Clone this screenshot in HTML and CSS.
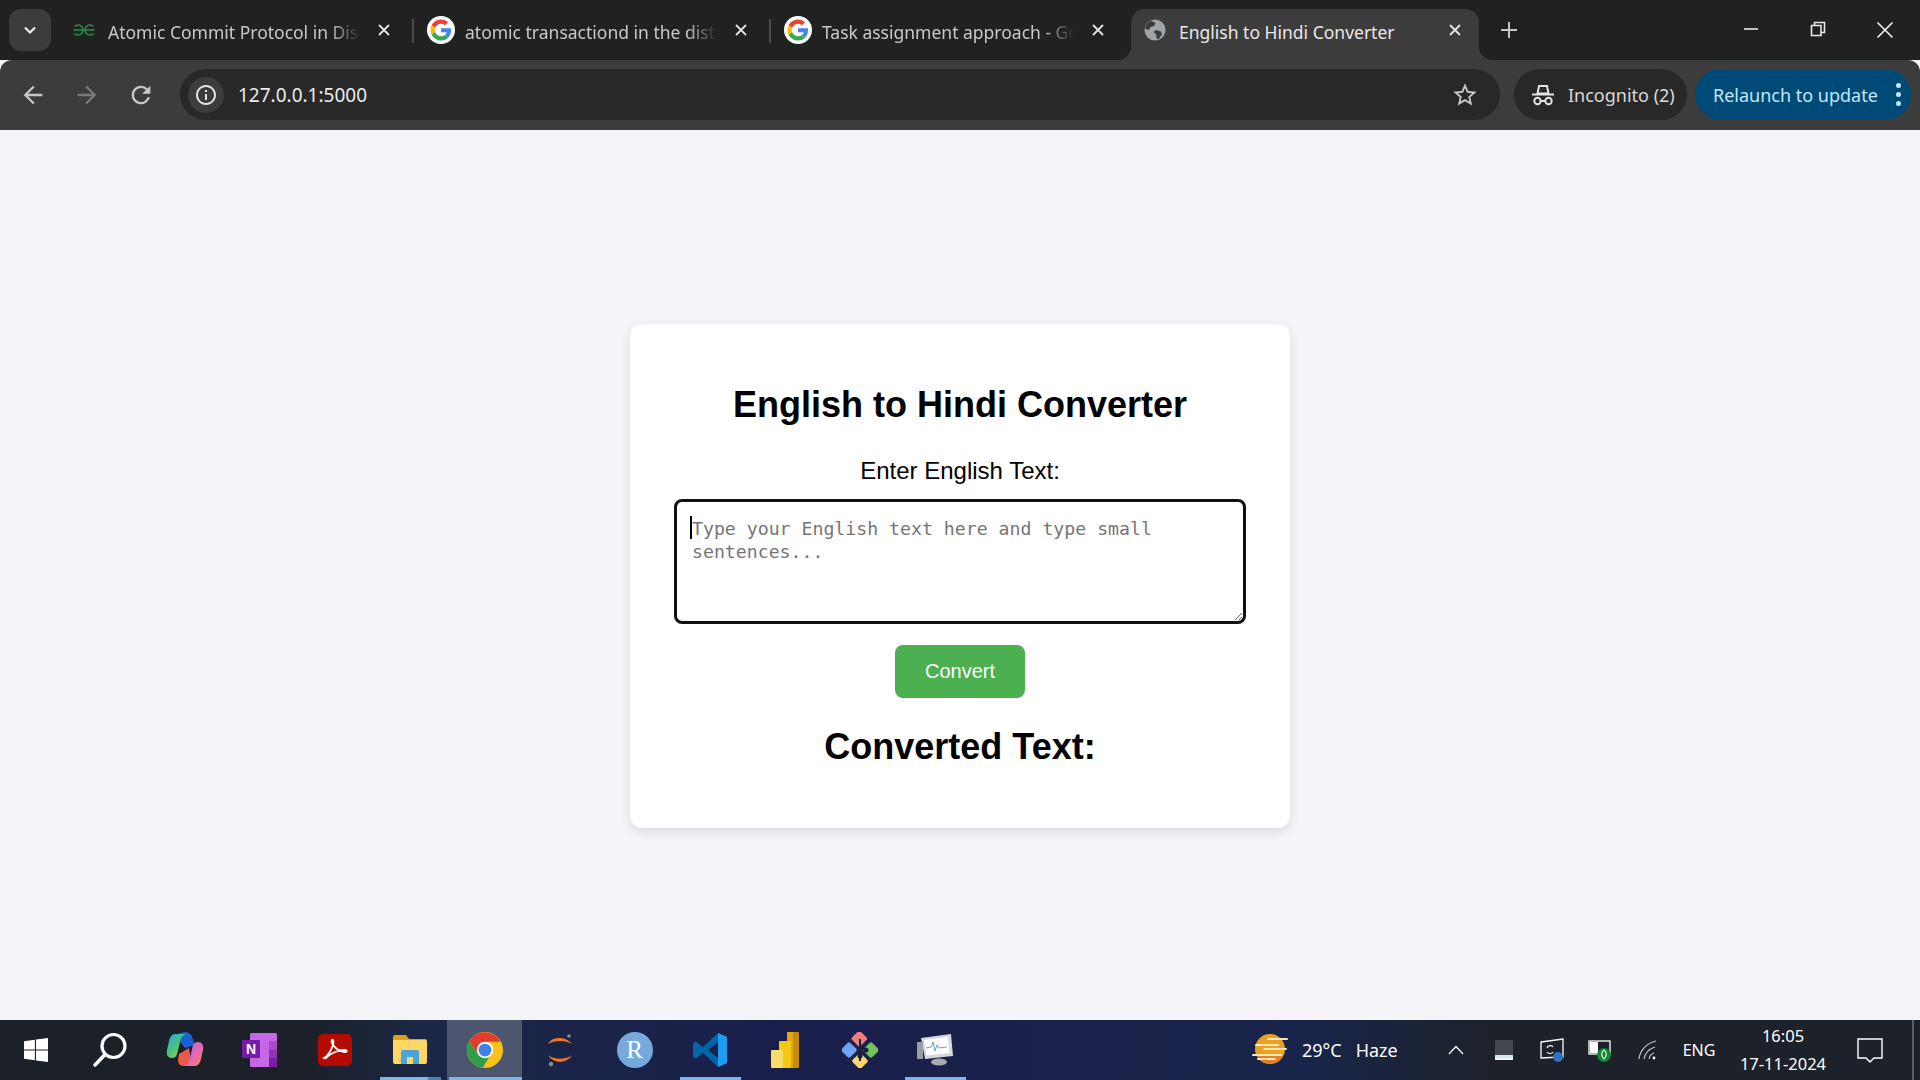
FILE: index.html
```html
<!DOCTYPE html>
<html lang="en">

<head>
    <meta charset="UTF-8">
    <meta name="viewport" content="width=device-width, initial-scale=1.0">
    <title>English to Hindi Converter</title>
    <link rel="stylesheet" href="styles.css">
</head>

<body>
    <svg class="defs" width="0" height="0">
        <symbol id="google" viewBox="-8 -8 64 64">
            <circle cx="24" cy="24" r="32" fill="#fff"/>
            <path fill="#EA4335" d="M24 9.5c3.54 0 6.71 1.22 9.21 3.6l6.85-6.85C35.9 2.38 30.47 0 24 0 14.62 0 6.51 5.38 2.56 13.22l7.98 6.19C12.43 13.72 17.74 9.5 24 9.5z"/>
            <path fill="#4285F4" d="M46.98 24.55c0-1.57-.15-3.09-.38-4.55H24v9.02h12.94c-.58 2.96-2.26 5.48-4.78 7.18l7.73 6c4.51-4.18 7.09-10.36 7.09-17.65z"/>
            <path fill="#FBBC05" d="M10.53 28.59c-.48-1.45-.76-2.99-.76-4.59s.27-3.14.76-4.59l-7.98-6.19C.92 16.46 0 20.12 0 24c0 3.88.92 7.54 2.56 10.78l7.97-6.19z"/>
            <path fill="#34A853" d="M24 48c6.48 0 11.93-2.13 15.89-5.81l-7.73-6c-2.15 1.45-4.92 2.3-8.16 2.3-6.26 0-11.57-4.22-13.47-9.91l-7.98 6.19C6.51 42.62 14.62 48 24 48z"/>
        </symbol>
        <symbol id="close" viewBox="0 0 24 24">
            <path d="M6 6l12 12M18 6L6 18" fill="none" stroke="currentColor" stroke-width="2.2"/>
        </symbol>
    </svg>

    <header class="tabstrip">
        <button class="tab-menu">
            <svg width="16" height="16" viewBox="0 0 16 16"><path d="M3 5.5l5 5 5-5" fill="none" stroke="#e8eaed" stroke-width="2.2"/></svg>
        </button>
        <div class="tab">
            <span class="favicon">
                <svg width="24" height="14" viewBox="0 0 24 13"><path d="M2.5 3A5 5 0 1 1 2.500 10M1.500 6.500H11.500M21.500 3A5 5 0 1 0 21.500 10M22.500 6.500H12.500" fill="none" stroke="#2f8d46" stroke-width="1.500"/></svg>
            </span>
            <span class="tab-title fade">Atomic Commit Protocol in Distributed Systems</span>
            <svg class="tab-close"><use href="#close"/></svg>
        </div>
        <span class="tab-sep"></span>
        <div class="tab">
            <span class="favicon"><svg width="28" height="28"><use href="#google"/></svg></span>
            <span class="tab-title fade">atomic transactiond in the distributed</span>
            <svg class="tab-close"><use href="#close"/></svg>
        </div>
        <span class="tab-sep"></span>
        <div class="tab">
            <span class="favicon"><svg width="28" height="28"><use href="#google"/></svg></span>
            <span class="tab-title fade">Task assignment approach - Google Search</span>
            <svg class="tab-close"><use href="#close"/></svg>
        </div>
        <span class="tab-sep blank"></span>
        <div class="tab active">
            <span class="favicon">
                <svg width="22" height="22" viewBox="0 0 22 22">
                    <circle cx="11" cy="11" r="10.500" fill="#a0a4a9"/>
                    <path d="M7 1.500L11.500 4 10 7 6.500 8 5 11 1 9.500C1.500 6 3.500 3 7 1.500zM12 11l5 1.500 1 3-3.500 5-2-1.500-.5-4-2.500-2z" fill="#3c3c3c"/>
                </svg>
            </span>
            <span class="tab-title">English to Hindi Converter</span>
            <svg class="tab-close"><use href="#close"/></svg>
        </div>
        <svg class="new-tab" width="20" height="20" viewBox="0 0 20 20"><path d="M10 2v16M2 10h16" stroke="#c7c7c7" stroke-width="2"/></svg>
        <div class="window-btns">
            <svg width="18" height="18" viewBox="0 0 18 18"><path d="M2 9h14" stroke="#e8e8e8" stroke-width="1.600"/></svg>
            <svg width="18" height="18" viewBox="0 0 18 18"><path d="M2.500 5.500h9.500v10h-9.500zM5.500 5.500v-3h10v10h-3.500" fill="none" stroke="#e8e8e8" stroke-width="1.600"/></svg>
            <svg width="20" height="20" viewBox="0 0 20 20"><path d="M2.500 2.500l15 15M17.500 2.500l-15 15" stroke="#f0f0f0" stroke-width="1.600"/></svg>
        </div>
    </header>

    <nav class="toolbar">
        <div class="nav-btn">
            <svg width="28" height="28" viewBox="0 0 24 24"><path fill="#c7c7c7" d="M20 11H7.830l5.590-5.590L12 4l-8 8 8 8 1.410-1.410L7.830 13H20z"/></svg>
        </div>
        <div class="nav-btn">
            <svg width="28" height="28" viewBox="0 0 24 24"><path fill="#7a7a7a" d="M4 11h12.170l-5.590-5.590L12 4l8 8-8 8-1.410-1.410L16.170 13H4z"/></svg>
        </div>
        <div class="nav-btn">
            <svg width="28" height="28" viewBox="0 0 24 24"><path fill="#c7c7c7" d="M17.650 6.350A7.950 7.950 0 0 0 12 4a8 8 0 1 0 7.730 10h-2.080A6 6 0 1 1 12 6c1.660 0 3.140.690 4.220 1.780L13 11h7V4z"/></svg>
        </div>
        <div class="omnibox">
            <span class="site-info">
                <svg width="24" height="24" viewBox="0 0 24 24"><path fill="#e3e3e3" d="M11 7h2v2h-2zm0 4h2v6h-2zm1-9C6.480 2 2 6.480 2 12s4.480 10 10 10 10-4.480 10-10S17.520 2 12 2zm0 18c-4.410 0-8-3.590-8-8s3.590-8 8-8 8 3.590 8 8-3.590 8-8 8z"/></svg>
            </span>
            <span class="url">127.0.0.1:5000</span>
            <svg class="star" width="28" height="28" viewBox="0 0 24 24"><path fill="#c7c7c7" d="M22 9.240l-7.190-.620L12 2 9.190 8.630 2 9.240l5.460 4.730L5.820 21 12 17.270 18.180 21l-1.630-7.030L22 9.240zM12 15.400l-3.760 2.270 1-4.280-3.320-2.880 4.380-.380L12 6.100l1.710 4.040 4.380.380-3.320 2.880 1 4.280L12 15.400z"/></svg>
        </div>
        <div class="incognito">
            <svg width="24" height="24" viewBox="0 0 24 24">
                <path d="M6.500 10.500L8 3h8l1.500 7.500z" fill="none" stroke="#e3e3e3" stroke-width="2"/>
                <path d="M1 11.500h22" stroke="#e3e3e3" stroke-width="2"/>
                <circle cx="6.500" cy="18" r="3.200" fill="none" stroke="#e3e3e3" stroke-width="2"/>
                <circle cx="17.500" cy="18" r="3.200" fill="none" stroke="#e3e3e3" stroke-width="2"/>
                <path d="M9.700 18h4.600" stroke="#e3e3e3" stroke-width="2"/>
            </svg>
            <span>Incognito (2)</span>
        </div>
        <div class="relaunch">
            <span>Relaunch to update</span>
            <span class="dots"><i></i><i></i><i></i></span>
        </div>
    </nav>

    <main class="page">
        <div class="container">
            <h1>English to Hindi Converter</h1>
            <label for="englishText">Enter English Text:</label>
            <div class="field">
                <textarea id="englishText" placeholder="Type your English text here and type small sentences..."></textarea>
            </div>
            <button class="convert">Convert</button>
            <h2>Converted Text:</h2>
        </div>
    </main>

    <footer class="taskbar">
        <div class="slot start">
            <svg width="24" height="24" viewBox="0 0 24 24"><path fill="#fff" d="M0 3.300L10.900 1.800V11.400H0zM12 1.600L24 0V11.400H12zM0 12.600H10.900V22.200L0 20.700zM12 12.600H24V24L12 22.400z"/></svg>
        </div>
        <div class="slot">
            <svg width="36" height="36" viewBox="0 0 36 36"><circle cx="21.500" cy="14" r="11.500" fill="none" stroke="#fff" stroke-width="3.200"/><path d="M13 22.500L3 33" stroke="#fff" stroke-width="3.500" stroke-linecap="round"/></svg>
        </div>
        <div class="slot">
            <svg width="38" height="36" viewBox="0 0 38 36">
                <defs>
                    <linearGradient id="cpA" x1="0" y1="0" x2="1" y2="1"><stop offset="0" stop-color="#1fa8e8"/><stop offset=".5" stop-color="#4dc47a"/><stop offset="1" stop-color="#f5c32c"/></linearGradient>
                    <linearGradient id="cpB" x1="0" y1="0" x2="1" y2="1"><stop offset="0" stop-color="#b06be8"/><stop offset=".6" stop-color="#e868b0"/><stop offset="1" stop-color="#f8913c"/></linearGradient>
                </defs>
                <path fill="#1764d8" d="M12 2c6-3 13-2 14 3l3 8-10 3-6-8z"/>
                <path fill="url(#cpA)" d="M9 2h11c-4 1-5 4-6 8l-3 12c-1 3-3 4-5 4-4 0-6-3-5-8l2-9C4 5 6 2 9 2z"/>
                <path fill="#e85a4a" d="M13 22l10-6 3 18H17c-3 0-5-3-5-6z"/>
                <path fill="url(#cpB)" d="M29 34H18c4-1 5-4 6-8l3-13c1-2 3-3 5-3 4 0 6 3 5 8l-2 9c-1 4-3 7-6 7z"/>
            </svg>
        </div>
        <div class="slot">
            <svg width="36" height="34" viewBox="0 0 36 34">
                <rect x="8" y="0" width="27" height="34" rx="1.500" fill="#c668e6"/>
                <rect x="27" y="8" width="8" height="8.500" fill="#a84ccb"/>
                <rect x="27" y="16.500" width="8" height="8.500" fill="#9432b8"/>
                <path d="M27 25h8v7.500a1.500 1.500 0 0 1-1.500 1.500H27z" fill="#7a1fa2"/>
                <rect x="0" y="7" width="18" height="18" rx="1" fill="#7719aa"/>
                <text class="note-n" x="9" y="21" text-anchor="middle">N</text>
            </svg>
        </div>
        <div class="slot">
            <svg width="34" height="32" viewBox="0 0 34 32">
                <rect width="34" height="32" rx="5" fill="#b30b00"/>
                <path d="M6 24c3-1 7-7 9-13 1-4 0-6-1-5-1.500 2 3 11 13 12 3 0 2-2-1-2-5 0-13 3-17 7-2 2-3 1-3 1z" fill="none" stroke="#fff" stroke-width="1.800"/>
            </svg>
        </div>
        <div class="slot running-dim">
            <svg width="34" height="30" viewBox="0 0 34 30">
                <path d="M2 0h11l3 4h16a2 2 0 0 1 2 2v6H0V2a2 2 0 0 1 2-2z" fill="#d9a21b"/>
                <path d="M0 5h32a2 2 0 0 1 2 2v20a2 2 0 0 1-2 2H2a2 2 0 0 1-2-2z" fill="#fcd765"/>
                <path d="M8 29V17a2 2 0 0 1 2-2h14a2 2 0 0 1 2 2v12h-6v-7h-6v7z" fill="#4aa3dc"/>
            </svg>
        </div>
        <div class="slot active running">
            <svg width="36" height="36" viewBox="0 0 48 48">
                <circle cx="24" cy="24" r="24" fill="#fbc116"/>
                <path fill="#e33b2e" d="M24 13H44.800A24 24 0 0 0 3.200 12L14.500 30z"/>
                <path fill="#2e9e48" d="M3.200 12A24 24 0 0 0 21 47.800L29.500 33.500 14.500 30z"/>
                <circle cx="24" cy="24" r="11" fill="#fff"/>
                <circle cx="24" cy="24" r="8.500" fill="#3f7fe8"/>
            </svg>
        </div>
        <div class="slot">
            <svg width="28" height="34" viewBox="0 0 28 34">
                <path d="M2 11C6 3 20 3 26 11 20 7 8 7 2 11zM2 22C8 27 20 27 26 22 21 31 7 31 2 22z" fill="#f37726"/>
                <circle cx="23" cy="3" r="1.800" fill="#8a8a8a"/>
                <circle cx="5" cy="31" r="2.200" fill="#8a8a8a"/>
            </svg>
        </div>
        <div class="slot">
            <span class="r-app">R</span>
        </div>
        <div class="slot running">
            <svg width="36" height="36" viewBox="0 0 36 36">
                <path fill="#0065a9" d="M26 1L11 15 4 9.500 1 11v14l3 1.500L11 21l15 14 9-4V5zM26 10v16l-10-8z"/>
                <path fill="#1f9cf0" d="M26 1l9 4v26l-9 4z"/>
            </svg>
        </div>
        <div class="slot">
            <svg width="28" height="36" viewBox="0 0 28 36">
                <rect x="16" y="0" width="12" height="36" rx="1" fill="#c88a0a"/>
                <rect x="16" y="0" width="6" height="36" fill="#e5a90f"/>
                <rect x="8" y="9" width="12" height="27" rx="1" fill="#f2c811"/>
                <rect x="0" y="18" width="12" height="18" rx="1" fill="#f7dc6a"/>
            </svg>
        </div>
        <div class="slot">
            <svg width="36" height="36" viewBox="0 0 36 36">
                <rect x="12" y="0" width="12" height="12" rx="2" fill="#f08080" transform="rotate(45 18 6) translate(0 1)"/>
                <rect x="1" y="12" width="12" height="12" rx="2" fill="#6fa3f5" transform="rotate(45 7 18)"/>
                <rect x="23" y="12" width="12" height="12" rx="2" fill="#72c35a" transform="rotate(45 29 18)"/>
                <rect x="12" y="23" width="12" height="12" rx="2" fill="#f8d967" transform="rotate(45 18 29)"/>
                <path d="M18 7v22M18 15l6 3" stroke="#1a1f3c" stroke-width="2"/>
                <circle cx="18" cy="24" r="2.500" fill="#1a1f3c"/>
                <circle cx="24" cy="18" r="2.500" fill="#1a1f3c"/>
            </svg>
        </div>
        <div class="slot running">
            <svg width="36" height="32" viewBox="0 0 36 32">
                <path d="M4 4l30-4 2 22-28 3z" fill="#d5d8dc"/>
                <path d="M7 6l24-3 1.500 16-23 2.500z" fill="#fff"/>
                <path d="M9 14l5-1 2-5 2 9 2-6 2 3 8-1" fill="none" stroke="#5aa7dc" stroke-width="1"/>
                <rect x="0" y="8" width="6" height="17" fill="#9a9ea3"/>
                <ellipse cx="22" cy="28" rx="8" ry="3.500" fill="#a8abaf"/>
            </svg>
        </div>

        <div class="tray">
            <div class="weather">
                <svg width="36" height="32" viewBox="0 0 36 32">
                    <circle cx="18" cy="15" r="15" fill="#f0a020"/>
                    <path d="M18 30a15 15 0 0 0 13-8H5a15 15 0 0 0 13 8z" fill="#e5801c"/>
                    <path d="M16 5h19M4 11h22M12 15h22M1 21h28M6 25h17" stroke="#fce8b8" stroke-width="2" stroke-linecap="round"/>
                </svg>
                <span>29°C</span>
                <span>Haze</span>
            </div>
            <div class="tray-icon">
                <svg width="16" height="10" viewBox="0 0 16 10"><path d="M1 9l7-7.500L15 9" fill="none" stroke="#fff" stroke-width="1.300"/></svg>
            </div>
            <div class="tray-icon">
                <svg width="18" height="20" viewBox="0 0 18 20"><rect width="18" height="20" fill="#44474f"/><rect y="15" width="18" height="5" fill="#cfe6f8"/><rect y="18" width="18" height="2" fill="#f4f4f4"/></svg>
            </div>
            <div class="tray-icon">
                <svg width="24" height="24" viewBox="0 0 24 24">
                    <path d="M1 4l22-3v18L1 20z" fill="none" stroke="#fff" stroke-width="1.300"/>
                    <path d="M7 10c1-3 5-3 6-1M13 14c-1 2-5 2-6 0" fill="none" stroke="#fff" stroke-width="1.200"/>
                    <circle cx="18" cy="19" r="5" fill="#2f72c4"/>
                </svg>
            </div>
            <div class="tray-icon">
                <svg width="24" height="24" viewBox="0 0 24 24">
                    <rect x="1" y="3" width="21" height="13" fill="#1c2029" stroke="#fff" stroke-width="1.300"/>
                    <rect x="2" y="4" width="8" height="11" fill="#fff"/>
                    <circle cx="16" cy="17" r="7" fill="#0e8a2c"/>
                    <path d="M16 12c3 2 3 6 0 9-3-3-3-7 0-9z" fill="none" stroke="#fff" stroke-width="1.100"/>
                </svg>
            </div>
            <div class="tray-icon">
                <svg width="20" height="20" viewBox="0 0 20 20">
                    <path d="M1 19C2 10 9 3 18 1M6 19C7 13 11 9 17 7M11 19c.5-3 2-5 5-6" fill="none" stroke="#c9ccd1" stroke-width="1.100"/>
                    <circle cx="16" cy="18" r="1.400" fill="#fff"/>
                </svg>
            </div>
            <div class="lang">ENG</div>
            <div class="clock">
                <span>16:05</span>
                <span>17-11-2024</span>
            </div>
            <div class="tray-icon notify">
                <svg width="26" height="26" viewBox="0 0 26 26"><path d="M1 2h24v19h-8l-4 4-4-4H1z" fill="none" stroke="#fff" stroke-width="1.400"/></svg>
            </div>
            <span class="show-desktop"></span>
        </div>
    </footer>
</body>

</html>
```

FILE: styles.css
```css
* {
    box-sizing: border-box;
}

body {
    margin: 0;
    width: 1920px;
    height: 1080px;
    overflow: hidden;
    display: flex;
    flex-direction: column;
    background-color: #f4f4f9;
    font-family: "Liberation Sans", Arial, sans-serif;
}

.defs {
    display: none;
}

/* tabs */
.tabstrip {
    height: 60px;
    flex: none;
    display: flex;
    align-items: stretch;
    padding-top: 9px;
    padding-left: 9px;
    background-color: #202222;
    font-family: "Noto Sans", sans-serif;
    font-size: 17.5px;
    color: #c7c9c9;
}

.tab-menu {
    width: 42px;
    height: 42px;
    margin-right: 9px;
    padding: 0;
    border: 0;
    border-radius: 12px;
    background-color: #3c3c3c;
    display: flex;
    align-items: center;
    justify-content: center;
}

.tab {
    width: 348px;
    height: 51px;
    padding: 0 12px 9px 10px;
    display: flex;
    align-items: center;
    position: relative;
}

.favicon {
    width: 28px;
    height: 28px;
    flex: none;
    margin-right: 10px;
    display: flex;
    align-items: center;
    justify-content: center;
}

.favicon svg {
    display: block;
}

.tab-title {
    width: 252px;
    flex: none;
    white-space: nowrap;
    overflow: hidden;
    line-height: 28px;
    margin-top: 4px;
}

.fade {
    -webkit-mask-image: linear-gradient(90deg, #000 88%, transparent 100%);
    mask-image: linear-gradient(90deg, #000 88%, transparent 100%);
}

.tab-close {
    width: 20px;
    height: 20px;
    margin-left: 14px;
    flex: none;
    color: #e3e3e3;
}

.tab-sep {
    width: 9px;
    height: 24px;
    margin-top: 10px;
    flex: none;
    background: linear-gradient(#4a4c4c, #4a4c4c) center / 2px 100% no-repeat;
}

.tab-sep.blank {
    background: none;
}

.tab.active {
    background-color: #3c3c3c;
    border-radius: 14px 14px 0 0;
    color: #e8e8e8;
}

.tab.active::before,
.tab.active::after {
    content: "";
    position: absolute;
    bottom: 0;
    width: 14px;
    height: 14px;
}

.tab.active::before {
    left: -14px;
    background: radial-gradient(circle at 0 0, transparent 14px, #3c3c3c 14.500px);
}

.tab.active::after {
    right: -14px;
    background: radial-gradient(circle at 100% 0, transparent 14px, #3c3c3c 14.500px);
}

.new-tab {
    margin: 11px 0 0 20px;
    flex: none;
}

.window-btns {
    margin-left: auto;
    width: 194px;
    padding: 11px 25px 0 16px;
    display: flex;
    justify-content: space-between;
    align-items: flex-start;
}

/* toolbar */
.toolbar {
    height: 70px;
    flex: none;
    display: flex;
    align-items: flex-start;
    padding: 9px 9px 0 6px;
    background-color: #3c3c3c;
    border-radius: 12px 12px 0 0;
    font-family: "Noto Sans", sans-serif;
    font-size: 18px;
}

.nav-btn {
    width: 54px;
    height: 51px;
    display: flex;
    align-items: center;
    justify-content: center;
}

.omnibox {
    width: 1320px;
    height: 51px;
    margin-left: 12px;
    padding: 0 11px 0 8px;
    border-radius: 26px;
    background-color: #282828;
    display: flex;
    align-items: center;
    color: #e8eaed;
}

.site-info {
    width: 36px;
    height: 36px;
    border-radius: 50%;
    background-color: #3c3c3c;
    display: flex;
    align-items: center;
    justify-content: center;
}

.url {
    margin-left: 14px;
    font-size: 19px;
}

.star {
    margin-left: auto;
    margin-right: 10px;
}

.incognito {
    width: 173px;
    height: 51px;
    margin-left: 14px;
    padding-left: 17px;
    border-radius: 26px;
    background-color: #282828;
    display: flex;
    align-items: center;
    gap: 13px;
    color: #d8d8d8;
}

.relaunch {
    width: 216px;
    height: 51px;
    margin-left: 8px;
    padding-left: 18px;
    border-radius: 26px;
    background-color: #004a77;
    display: flex;
    align-items: center;
    color: #c2e7ff;
}

.dots {
    margin-left: 18px;
    display: flex;
    flex-direction: column;
    gap: 4px;
}

.dots i {
    width: 5px;
    height: 5px;
    border-radius: 50%;
    background-color: #c2e7ff;
}

/* the page itself */
.page {
    flex: 1;
    display: flex;
    align-items: center;
    justify-content: center;
}

.container {
    width: 660px;
    height: 504px;
    padding: 60px 44px 0;
    margin-top: 2px;
    background-color: #fff;
    border-radius: 12px;
    box-shadow: 0 4px 12px rgba(0, 0, 0, 0.1);
    display: flex;
    flex-direction: column;
    align-items: center;
    color: #000;
}

h1 {
    margin: 0;
    font-size: 36px;
}

label {
    margin-top: 31px;
    font-size: 24px;
}

.field {
    width: 572px;
    height: 125px;
    margin-top: 14px;
    position: relative;
}

/* text caret in the focused box */
.field::after {
    content: "";
    position: absolute;
    left: 16px;
    top: 17px;
    width: 2px;
    height: 23px;
    background-color: #000;
}

textarea {
    display: block;
    width: 100%;
    height: 100%;
    padding: 15px;
    border: 3px solid #111;
    border-radius: 8px;
    background-color: #fff;
    outline: none;
    font-family: "DejaVu Sans Mono", monospace;
    font-size: 18.200px;
    line-height: 23px;
}

.convert {
    margin-top: 21px;
    padding: 15px 30px;
    border: 0;
    border-radius: 8px;
    background-color: #4caf50;
    color: #fff;
    font-family: "Liberation Sans", Arial, sans-serif;
    font-size: 20px;
}

h2 {
    margin: 28px 0 0;
    font-size: 36px;
}

/* windows taskbar */
.taskbar {
    height: 60px;
    flex: none;
    display: flex;
    align-items: stretch;
    background: linear-gradient(90deg, #1c2029 0, #1c2029 16%, #1b2745 22%, #191f4a 40%, #1a224a 60%, #18254a 68%, #1d2129 78%, #1d2129 100%);
    font-family: "Noto Sans", sans-serif;
    color: #fff;
}

.slot {
    width: 75px;
    display: flex;
    align-items: center;
    justify-content: center;
    position: relative;
}

.slot.start {
    width: 72px;
}

.slot.active {
    background-color: #4d566f;
}

.slot.running::after,
.slot.running-dim::after {
    content: "";
    position: absolute;
    left: 8px;
    right: 6px;
    bottom: 0;
    height: 3px;
    background-color: #76b9ed;
}

.slot.active::after {
    left: 2px;
    right: 0;
}

.slot.running-dim::after {
    background: linear-gradient(90deg, #76b9ed 0, #76b9ed 79%, #4a83b8 79%);
}

.note-n {
    font-family: "Liberation Sans", Arial, sans-serif;
    font-size: 14px;
    font-weight: bold;
    fill: #fff;
}

.r-app {
    width: 36px;
    height: 36px;
    border-radius: 50%;
    background-color: #75aadb;
    text-align: center;
    font-family: "Liberation Serif", serif;
    font-size: 25px;
    line-height: 36px;
    color: #fff;
}

.tray {
    margin-left: auto;
    width: 668px;
    display: flex;
    align-items: center;
}

.weather {
    width: 180px;
    display: flex;
    align-items: center;
    gap: 14px;
    font-size: 18px;
}

.tray-icon {
    width: 48px;
    display: flex;
    align-items: center;
    justify-content: center;
}

.lang {
    width: 54px;
    text-align: center;
    font-size: 16px;
}

.clock {
    width: 114px;
    display: flex;
    flex-direction: column;
    align-items: center;
    gap: 4px;
    font-size: 16.500px;
    line-height: 24px;
}

.notify {
    width: 60px;
}

.show-desktop {
    width: 2px;
    height: 60px;
    margin-left: 12px;
    background-color: #5a5e66;
}
```
